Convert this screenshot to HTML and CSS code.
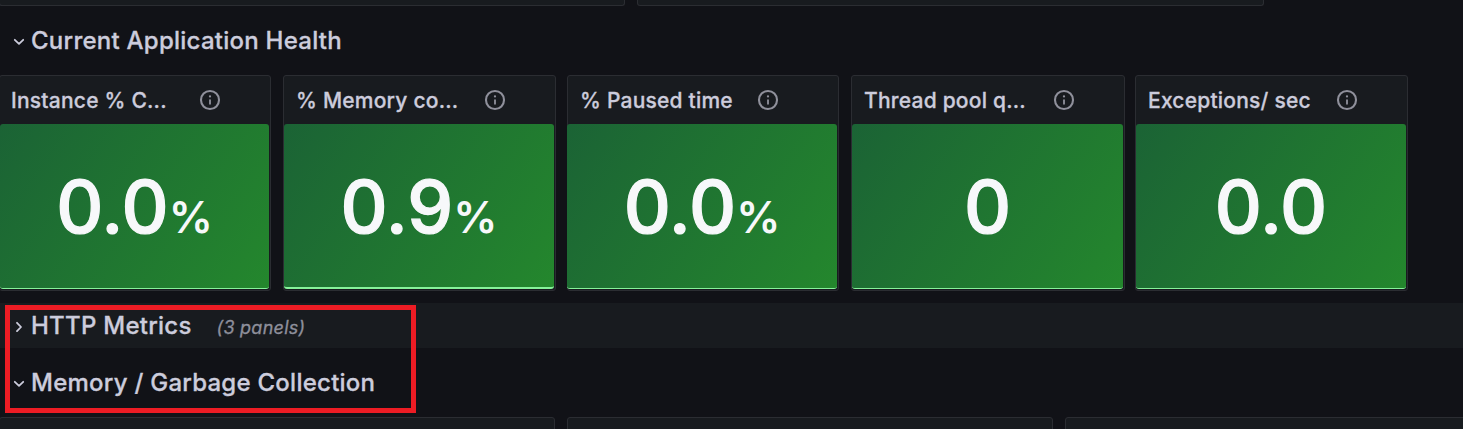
FILE: index.html
```
<!DOCTYPE html>
<html lang="en">
<head>
<meta charset="utf-8">
<title>Application dashboard</title>
<link rel="stylesheet" href="styles.css">
</head>
<body>
<svg class="defs" width="0" height="0">
  <symbol id="info" viewBox="0 0 24 24"><path d="M12 1a11 11 0 1 0 11 11A11 11 0 0 0 12 1Zm0 19.7a8.7 8.7 0 1 1 8.7-8.7 8.7 8.7 0 0 1-8.7 8.7Zm0-9.6a1 1 0 0 0-1 1v4a1 1 0 0 0 2 0v-4a1 1 0 0 0-1-1Zm0-4.2a1.25 1.25 0 1 0 1.25 1.25A1.25 1.25 0 0 0 12 6.9Z"/></symbol>
</svg>
<main class="dashboard">
  <div class="top-panels"><div class="stub"></div><div class="stub"></div></div>
  <h2 class="row health"><svg class="chevron" viewBox="0 0 12 12"><path d="M1.8 4.8 6 8.8 10.2 4.8"/></svg><span>Current Application Health</span></h2>
  <div class="stats">
    <section class="panel p1"><header><span class="title">Instance % C...</span><svg class="info"><use href="#info"/></svg></header><div class="value"><b>0.0</b><i>%</i></div></section>
    <section class="panel p2"><header><span class="title">% Memory co...</span><svg class="info"><use href="#info"/></svg></header><div class="value"><b>0.9</b><i>%</i></div></section>
    <section class="panel p3"><header><span class="title">% Paused time</span><svg class="info"><use href="#info"/></svg></header><div class="value"><b>0.0</b><i>%</i></div></section>
    <section class="panel p4"><header><span class="title">Thread pool q...</span><svg class="info"><use href="#info"/></svg></header><div class="value"><b>0</b></div></section>
    <section class="panel p5"><header><span class="title">Exceptions/ sec</span><svg class="info"><use href="#info"/></svg></header><div class="value"><b>0.0</b></div></section>
  </div>
  <h2 class="row http"><svg class="chevron" viewBox="0 0 12 12"><path d="M4 2.8 8 7 4 11.2"/></svg><span>HTTP Metrics</span><em>(3 panels)</em></h2>
  <h2 class="row memory"><svg class="chevron" viewBox="0 0 12 12"><path d="M1.8 4.8 6 8.8 10.2 4.8"/></svg><span>Memory / Garbage Collection</span></h2>
  <div class="bottom-panels"><div class="stub"></div><div class="stub"></div><div class="stub"></div></div>
  <div class="highlight"></div>
</main>
</body>
</html>
```
FILE: styles.css
```
* { box-sizing: border-box; }
body { margin: 0; background: #111217; color: #ccccdc; font-family: Inter, sans-serif; overflow: hidden; }
.defs { position: absolute; }
.dashboard { position: relative; width: 1463px; height: 429px; overflow: hidden; display: flex; flex-direction: column; }
.stub { background: #181b1f; border: 1px solid #2b2d32; }
.top-panels { display: grid; grid-template-columns: 626px 627px; column-gap: 12px; margin-left: -1px; height: 6px; flex: none; }
.top-panels .stub { border-top: 0; border-radius: 0 0 3px 3px; }
.row { margin: 0; display: flex; align-items: center; flex: none; font-size: 24px; line-height: 30px; font-weight: 500; letter-spacing: .25px; -webkit-text-stroke: .3px; white-space: nowrap; padding-left: 13px; }
.chevron { width: 12px; height: 12px; margin-right: 6px; fill: none; stroke: #ccccdc; stroke-width: 1.8; stroke-linecap: round; stroke-linejoin: round; }
.health { height: 69px; }
.stats { display: grid; grid-template-columns: repeat(5, 284px); height: 216px; margin-left: -1px; flex: none; }
.panel { width: 273px; background: #181b1f; border: 1px solid #2b2d32; border-radius: 3px; display: flex; flex-direction: column; }
.p1 { width: 272px; }
.p4 { width: 274px; }
.panel header { height: 48px; display: flex; align-items: center; padding-left: 12px; flex: none; }
.p1 header { padding-left: 11px; }
.title { width: 188px; font-size: 21px; font-weight: 500; letter-spacing: .22px; -webkit-text-stroke: .3px; white-space: nowrap; }
.p3 .title { width: 177px; }
.p4 .title { width: 189px; }
.info { width: 22px; height: 22px; fill: #8f909b; }
.value { height: 165px; margin-right: 1px; border-radius: 3px; border-bottom: 1px solid #86f29a; background: linear-gradient(125deg, #1b6335, #24872d); color: #f7f8fa; display: flex; justify-content: center; align-items: baseline; padding-top: 38px; line-height: 90px; }
.p2 .value { border-bottom-width: 2px; }
.p3 { width: 272px; margin-left: 0; }
.p3 .value { margin-left: -1px; }
.value b { font-size: 73px; font-weight: 500; -webkit-text-stroke: 1.2px; }
.value i { font-size: 44px; font-weight: 600; font-style: normal; margin-left: 0; }
.http { margin-top: 12px; height: 45px; background: #181b1f; }
.http em { font-size: 18px; font-weight: 400; color: #8e8f9b; margin: 4px 0 0 25px; }
.memory { height: 69px; }
.bottom-panels { display: grid; grid-template-columns: 556px 486px 410px; column-gap: 12px; margin-left: -1px; height: 20px; flex: none; }
.bottom-panels .stub { border-radius: 3px 3px 0 0; }
.highlight { position: absolute; left: 5px; top: 305px; width: 411px; height: 108px; border: 5px solid #ed1c24; }
```
